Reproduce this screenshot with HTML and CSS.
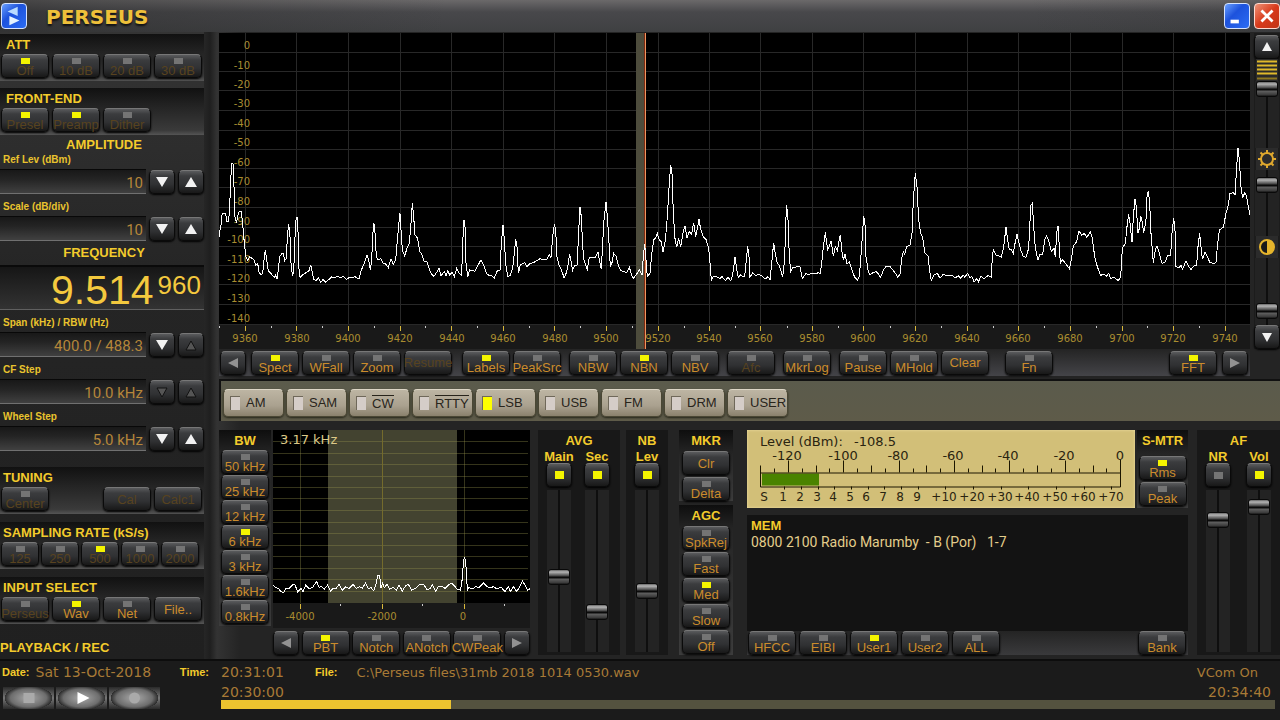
FILE: index.html
```html
<!DOCTYPE html>
<html lang="en">
<head>
<meta charset="utf-8">
<title>Perseus</title>
<link rel="stylesheet" href="styles.css">
</head>
<body>
<header class="titlebar">
  <button class="winbtn" aria-label="Application menu"><svg viewBox="0 0 26 26"><path d="M17 3v10L6 8z" fill="#b9dcff"/><path d="M8 13v10l11-5z" fill="#e4f3ff"/></svg></button>
  <h1>PERSEUS</h1>
  <div class="wincontrols">
    <button class="winbtn" aria-label="Minimize"><svg viewBox="0 0 26 26"><path d="M6 17h9v4H6z" fill="#fff"/></svg></button>
    <button class="winbtn close" aria-label="Close"><svg viewBox="0 0 26 26"><path d="M7 7l12 12M19 7L7 19" stroke="#fff" stroke-width="3"/></svg></button>
  </div>
</header>
<main class="radio">
  <aside class="side">
    <section class="panel">
      <h2>ATT</h2>
      <div class="row"><button class="btn led on dim">Off</button><button class="btn led dim">10 dB</button><button class="btn led dim">20 dB</button><button class="btn led dim">30 dB</button></div>
    </section>
    <section class="panel next">
      <h2>FRONT-END</h2>
      <div class="row"><button class="btn led on dim">Presel</button><button class="btn led on dim">Preamp</button><button class="btn led dim">Dither</button></div>
    </section>
    <h2 class="center">AMPLITUDE</h2>
    <div class="field"><label for="ref">Ref Lev (dBm)</label><div class="spin"><input id="ref" value="10"><button class="btn arrow" aria-label="Down"><svg viewBox="0 0 12 12"><path d="M0 1h12L6 11z"/></svg></button><button class="btn arrow" aria-label="Up"><svg viewBox="0 0 12 12"><path d="M0 11h12L6 1z"/></svg></button></div></div>
    <div class="field"><label for="scale">Scale (dB/div)</label><div class="spin"><input id="scale" value="10"><button class="btn arrow" aria-label="Down"><svg viewBox="0 0 12 12"><path d="M0 1h12L6 11z"/></svg></button><button class="btn arrow" aria-label="Up"><svg viewBox="0 0 12 12"><path d="M0 11h12L6 1z"/></svg></button></div></div>
    <h2 class="center freqhead">FREQUENCY</h2>
    <output class="freq"><span>9.514</span><span class="hz">960</span></output>
    <div class="field"><label for="span">Span (kHz) / RBW (Hz)</label><div class="spin"><input id="span" value="400.0 / 488.3"><button class="btn arrow" aria-label="Down"><svg viewBox="0 0 12 12"><path d="M0 1h12L6 11z"/></svg></button><button class="btn arrow off" aria-label="Up"><svg viewBox="0 0 12 12"><path d="M1 11L6 2l5 9z"/></svg></button></div></div>
    <div class="field"><label for="cf">CF Step</label><div class="spin"><input id="cf" value="10.0 kHz"><button class="btn arrow off" aria-label="Down"><svg viewBox="0 0 12 12"><path d="M1 2h10L6 11z"/></svg></button><button class="btn arrow off" aria-label="Up"><svg viewBox="0 0 12 12"><path d="M1 11L6 2l5 9z"/></svg></button></div></div>
    <div class="field"><label for="wheel">Wheel Step</label><div class="spin"><input id="wheel" value="5.0 kHz"><button class="btn arrow" aria-label="Down"><svg viewBox="0 0 12 12"><path d="M0 1h12L6 11z"/></svg></button><button class="btn arrow" aria-label="Up"><svg viewBox="0 0 12 12"><path d="M0 11h12L6 1z"/></svg></button></div></div>
    <section class="panel lower first">
      <h2>TUNING</h2>
      <div class="row"><button class="btn led dim">Center</button><button class="btn dim push">Cal</button><button class="btn dim">Calc1</button></div>
    </section>
    <section class="panel lower">
      <h2>SAMPLING RATE (kS/s)</h2>
      <div class="row five"><button class="btn led dim">125</button><button class="btn led dim">250</button><button class="btn led on dim">500</button><button class="btn led dim">1000</button><button class="btn led dim">2000</button></div>
    </section>
    <section class="panel lower">
      <h2>INPUT SELECT</h2>
      <div class="row"><button class="btn led dim">Perseus</button><button class="btn led on">Wav</button><button class="btn led">Net</button><button class="btn">File..</button></div>
    </section>
    <h2 class="playhead">PLAYBACK / REC</h2>
  </aside>

  <div class="work">
    <div class="scope">
      <svg class="spectrum" viewBox="219 33 1031 316" role="img" aria-label="Spectrum">
        <rect x="219" y="33" width="1031" height="292" fill="#000"/>
        <rect x="219" y="325" width="1031" height="24" fill="#191919"/>
        <path class="grid" d="M219 52.5H1250M219 71.5H1250M219 90.5H1250M219 110.5H1250M219 130.5H1250M219 149.5H1250M219 168.5H1250M219 187.5H1250M219 207.5H1250M219 227.5H1250M219 246.5H1250M219 265.5H1250M219 284.5H1250M219 304.5H1250M219 324.5H1250M245.5 33V324M296.5 33V324M348.5 33V324M400.5 33V324M451.5 33V324M503.5 33V324M554.5 33V324M606.5 33V324M658.5 33V324M709.5 33V324M760.5 33V324M812.5 33V324M863.5 33V324M915.5 33V324M967.5 33V324M1018.5 33V324M1070.5 33V324M1122.5 33V324M1173.5 33V324M1225.5 33V324"/>
        <path stroke="#d9b93c" d="M245.5 326v5M296.5 326v5M348.5 326v5M400.5 326v5M451.5 326v5M503.5 326v5M554.5 326v5M606.5 326v5M658.5 326v5M709.5 326v5M760.5 326v5M812.5 326v5M863.5 326v5M915.5 326v5M967.5 326v5M1018.5 326v5M1070.5 326v5M1122.5 326v5M1173.5 326v5M1225.5 326v5"/>
        <path stroke="#ccc" d="M219.5 326v2M271.5 326v2M322.5 326v2M374.5 326v2M425.5 326v2M477.5 326v2M529.5 326v2M580.5 326v2M632.5 326v2M684.5 326v2M735.5 326v2M787.5 326v2M838.5 326v2M890.5 326v2M941.5 326v2M993.5 326v2M1044.5 326v2M1096.5 326v2M1147.5 326v2M1199.5 326v2"/>
        <rect x="636" y="33" width="9" height="316" fill="#4d4c3c"/>
        <g class="axis" text-anchor="end">
          <text x="250" y="49">0</text><text x="250" y="69">-10</text><text x="250" y="88">-20</text><text x="250" y="107">-30</text><text x="250" y="127">-40</text><text x="250" y="146">-50</text><text x="250" y="166">-60</text><text x="250" y="185">-70</text><text x="250" y="205">-80</text><text x="250" y="225">-90</text><text x="250" y="243">-100</text><text x="250" y="263">-110</text><text x="250" y="282">-120</text><text x="250" y="302">-130</text><text x="250" y="322">-140</text>
        </g>
        <g class="axis" text-anchor="middle">
          <text x="245" y="342">9360</text><text x="297" y="342">9380</text><text x="348" y="342">9400</text><text x="400" y="342">9420</text><text x="452" y="342">9440</text><text x="503" y="342">9460</text><text x="555" y="342">9480</text><text x="606" y="342">9500</text><text x="658" y="342">9520</text><text x="709" y="342">9540</text><text x="760" y="342">9560</text><text x="812" y="342">9580</text><text x="863" y="342">9600</text><text x="915" y="342">9620</text><text x="967" y="342">9640</text><text x="1018" y="342">9660</text><text x="1070" y="342">9680</text><text x="1122" y="342">9700</text><text x="1173" y="342">9720</text><text x="1225" y="342">9740</text>
        </g>
        <path d="M644.5 33V349" stroke="#7b2a12"/><path d="M645.5 33V349" stroke="#ee9560"/>
        <g class="trace" transform="translate(215 30) scale(.33333)"><polyline points="10,636 15,600 18,585 20,558 24,550 32,552 36,575 40,575 44,540 46,470 50,402 54,402 57,470 60,560 64,578 68,560 72,545 78,543 82,570 88,640 93,680 98,690 104,680 112,686 118,690 122,706 128,700 132,725 138,736 143,730 147,690 151,660 155,690 160,722 170,733 178,742 181,735 186,746 190,720 194,680 200,672 205,672 209,692 214,685 217,620 221,582 225,620 228,700 232,735 236,730 239,640 243,570 246,562 249,600 250,700 255,742 262,735 275,727 282,722 287,704 291,722 296,748 303,752 310,744 317,757 324,749 332,757 340,750 350,741 358,744 367,738 375,743 385,739 395,748 403,742 412,742 420,740 432,747 438,722 448,700 456,676 461,690 466,720 470,690 473,620 476,578 479,590 484,680 490,690 497,686 505,700 512,702 520,713 528,686 535,703 542,690 548,620 552,575 555,550 558,600 562,660 569,678 576,655 583,640 588,580 592,519 596,560 600,615 608,625 614,665 620,672 628,695 635,693 642,715 650,733 657,739 665,727 672,715 678,737 688,725 693,737 698,722 704,735 712,727 718,740 725,715 732,730 740,736 743,640 747,570 750,590 753,700 758,740 764,720 772,722 780,724 788,708 798,689 806,705 814,730 822,736 830,738 838,744 847,722 855,720 859,640 864,585 868,630 872,700 878,740 885,737 893,715 897,680 902,628 906,650 910,730 916,705 924,700 930,698 936,710 945,700 955,698 965,692 975,686 985,690 995,688 1003,675 1008,682 1013,620 1018,583 1022,600 1026,680 1032,705 1040,722 1048,745"/></g>
        <g class="trace" transform="translate(560 30) scale(.33333)"><polyline points="13,745 20,725 24,705 29,672 35,705 38,720 44,706 52,705 55,620 60,532 64,560 68,650 72,690 82,718 88,682 96,682 105,683 114,665 118,690 124,718 128,640 132,570 138,515 142,560 146,620 151,710 157,695 161,670 168,678 175,705 182,722 192,725 200,728 208,712 215,735 220,745 230,732 238,720 246,735 250,680 254,642 258,690 262,740 270,730 276,665 282,628 288,622 292,610 297,628 304,635 309,665 316,632 322,560 326,490 332,405 336,430 339,520 344,620 350,652 356,625 362,650 370,605 375,588 381,625 388,605 395,612 401,578 407,620 413,590 417,568 422,598 430,620 438,628 446,655 450,700 454,750 460,738 470,740 480,745 486,740 496,752 504,742 512,752 516,742 520,722 525,680 530,718 535,742 542,735 548,740 554,740 558,700 563,648 567,680 570,742 578,728 586,737 596,733 606,738 616,747 624,740 630,750 636,690 641,638 646,672 652,700 658,706 668,740 674,690 677,580 680,524 684,570 688,680 692,725 698,712 706,712 714,708 720,710 727,745 738,730 745,735 755,730 765,732 775,728 781,730 786,690 790,650 796,607 803,660 808,650 813,632 820,678 826,650 832,662 836,640 841,614 846,665 850,690 855,672 861,702 868,695 876,720 884,742 892,750 898,740 902,690 907,620 911,558 915,585 918,680 925,725 930,735 940,727 948,725 955,732 962,742 970,720 978,710 990,710 1000,722 1008,732 1014,742 1020,732"/></g>
        <g class="trace" transform="translate(900 0) scale(.33333)"><polyline points="0,822 5,775 10,755 14,762 20,740 30,735 36,700 40,600 46,520 51,560 56,660 62,700 68,712 75,760 84,768 90,820 94,842 102,825 112,820 120,835 130,822 140,828 155,825 165,834 175,828 182,834 190,826 195,832 202,820 210,832 216,830 222,846 230,836 235,846 243,828 252,836 265,826 274,832 277,770 280,750 288,765 296,768 304,772 311,740 318,682 323,720 328,748 334,748 340,760 346,725 351,703 357,730 362,750 370,770 378,772 386,745 389,680 393,615 397,610 401,680 406,745 414,780 420,762 428,765 434,720 440,708 448,728 454,755 462,745 466,772 470,700 474,677 478,740 481,790 488,778 496,790 508,806 514,780 520,738 530,725 537,692 545,706 553,700 560,712 571,696 577,715 584,770 592,800 602,826 612,822 620,828 626,820 632,835 642,832 655,842 662,830 667,745 676,730 681,680 686,643 690,670 696,727 700,650 705,598 709,620 714,700 718,685 722,648 727,665 731,700 738,660 741,590 745,573 749,610 753,700 760,788 766,750 771,738 778,760 786,790 796,785 802,768 812,765 816,700 821,655 825,690 828,800 838,803 843,795 847,808 853,795 858,783 866,800 873,808 882,798 890,795 894,740 899,700 903,740 907,778 915,757 922,770 930,788 942,790 948,788 952,740 958,690 970,682 978,640 985,615 990,580 1000,578 1005,585 1010,500 1014,443 1018,480 1023,560 1028,595 1034,578 1040,590 1046,625 1050,645"/></g>
      </svg>
      <div class="rail">
        <button class="btn arrow" aria-label="Scroll up"><svg viewBox="0 0 12 12"><path d="M1 10h10L6 1z"/></svg></button>
        <svg class="railicon" viewBox="0 0 22 22"><path d="M1 2.5h20M1 6.5h20M1 10.5h20M1 14.5h20" stroke="#e0b92a" stroke-width="2"/><path d="M1 19.5h20" stroke="#8c7720" stroke-width="2"/></svg>
        <input type="range" class="slider" aria-label="Waterfall speed" value="0">
        <svg class="railicon" viewBox="0 0 22 22" fill="none" stroke="#e0a92e"><circle cx="11" cy="11" r="6" stroke-width="2"/><path d="M11 2v3M11 17v3M2 11h3M17 11h3M4.500 4.500l2 2M15.500 15.500l2 2M4.500 17.500l2-2M15.500 6.500l2-2" stroke-width="2"/></svg>
        <input type="range" class="slider" aria-label="Brightness" value="14">
        <svg class="railicon" viewBox="0 0 22 22"><circle cx="11" cy="11" r="7" fill="#191919" stroke="#e6b52c" stroke-width="2"/><path d="M11 4a7 7 0 0 1 0 14z" fill="#e6b52c"/></svg>
        <input type="range" class="slider" aria-label="Contrast" value="88">
        <button class="btn arrow" aria-label="Scroll down"><svg viewBox="0 0 12 12"><path d="M1 2h10L6 11z"/></svg></button>
      </div>
    </div>

    <nav class="toolbar">
      <button class="btn arrow gray" aria-label="Previous"><svg viewBox="0 0 12 12"><path d="M11 1v10L1 6z"/></svg></button>
      <div class="row g5"><button class="btn led on">Spect</button><button class="btn led">WFall</button><button class="btn led">Zoom</button><button class="btn dim">Resume</button></div>
      <div class="row g10"><button class="btn led on">Labels</button><button class="btn led">PeakSrc</button></div>
      <div class="row g8"><button class="btn led">NBW</button><button class="btn led on">NBN</button><button class="btn led">NBV</button></div>
      <div class="row g8"><button class="btn led dim">Afc</button></div>
      <div class="row g8"><button class="btn led">MkrLog</button></div>
      <div class="row g8"><button class="btn led">Pause</button><button class="btn led">MHold</button><button class="btn">Clear</button></div>
      <div class="row g16"><button class="btn led">Fn</button></div>
      <div class="row end"><button class="btn led on">FFT</button></div>
      <button class="btn arrow gray g5" aria-label="Next"><svg viewBox="0 0 12 12"><path d="M1 1v10l10-5z"/></svg></button>
    </nav>

    <nav class="modes">
      <button>AM</button><button>SAM</button><button><span class="over">CW</span></button><button><span class="over">RTTY</span></button><button class="on">LSB</button><button>USB</button><button>FM</button><button>DRM</button><button>USER</button>
    </nav>

    <div class="deck">
      <section class="stack bw">
        <h2>BW</h2>
        <button class="btn led">50 kHz</button><button class="btn led">25 kHz</button><button class="btn led">12 kHz</button><button class="btn led on">6 kHz</button><button class="btn led">3 kHz</button><button class="btn led">1.6kHz</button><button class="btn led">0.8kHz</button>
      </section>
      <section class="filter">
        <svg viewBox="273 430 257 198" role="img" aria-label="Filter passband">
          <rect x="273" y="430" width="257" height="173" fill="#000"/><rect x="273" y="603" width="257" height="25" fill="#191919"/>
          <rect x="328" y="430" width="129" height="173" fill="#434330"/>
          <path stroke="#98954e" stroke-opacity=".35" d="M273 441.5H528M273 453.5H528M273 464.5H528M273 476.5H528M273 487.5H528M273 498.5H528M273 510.5H528M273 522.5H528M273 533.5H528M273 545.5H528M273 556.5H528M273 568.5H528M273 579.5H528M273 591.5H528M300.5 430V603M464.5 430V603"/>
          <path stroke="#746b2c" d="M382.5 430V603"/>
          <path stroke="#d9b93c" d="M300.5 604v5M382.5 604v5M464.5 604v5"/><path stroke="#ccc" d="M340.5 604v2M422.5 604v2M504.5 604v2"/>
          <text class="bwtext" x="280" y="444">3.17 kHz</text>
          <g class="axis" text-anchor="middle"><text x="300" y="620">-4000</text><text x="382" y="620">-2000</text><text x="463" y="620">0</text></g>
          <g class="trace" transform="translate(215 425) scale(.33333)"><polyline points="175,480 182,488 190,490 198,500 206,502 212,490 222,490 232,480 240,480 248,500 258,490 264,500 272,480 282,490 292,488 305,470 312,487 320,485 328,492 338,480 346,498 354,490 362,492 372,478 382,496 392,485 402,490 414,478 424,490 434,485 442,490 452,474 460,492 468,488 476,497 484,475 488,452 494,452 498,490 503,475 508,488 516,478 524,492 534,487 544,495 552,480 562,498 572,482 580,478 590,495 602,490 614,478 626,478 636,495 646,490 652,480 662,498 670,485 682,485 690,490 700,480 710,475 720,485 728,494 736,495 740,480 744,430 748,395 752,410 754,440 757,495 762,488 772,492 782,485 792,488 806,474 816,485 826,488 836,485 846,492 858,486 870,500 880,485 886,500 896,485 904,498 912,490 922,468 930,480 938,496 946,490"/></g>
        </svg>
        <div class="row"><button class="btn arrow gray" aria-label="Previous"><svg viewBox="0 0 12 12"><path d="M11 1v10L1 6z"/></svg></button><button class="btn led on">PBT</button><button class="btn led">Notch</button><button class="btn led">ANotch</button><button class="btn led">CWPeak</button><button class="btn arrow gray" aria-label="Next"><svg viewBox="0 0 12 12"><path d="M1 1v10l10-5z"/></svg></button></div>
      </section>
      <section class="levels avg">
        <h2>AVG</h2>
        <div class="pair">
          <div class="fader"><label for="fmain">Main</label><button class="btn sq on" aria-label="Main averaging"></button><input id="fmain" type="range" class="slider" value="54"></div>
          <div class="fader"><label for="fsec">Sec</label><button class="btn sq on" aria-label="Secondary averaging"></button><input id="fsec" type="range" class="slider" value="78"></div>
        </div>
      </section>
      <section class="levels nb">
        <h2>NB</h2>
        <div class="pair"><div class="fader"><label for="fnb">Lev</label><button class="btn sq on" aria-label="Noise blanker"></button><input id="fnb" type="range" class="slider" value="64"></div></div>
      </section>
      <div class="ctl">
        <section class="stack"><h2>MKR</h2><button class="btn">Clr</button><button class="btn led">Delta</button></section>
        <section class="stack agc"><h2>AGC</h2><button class="btn led">SpkRej</button><button class="btn led">Fast</button><button class="btn led on">Med</button><button class="btn led">Slow</button><button class="btn led">Off</button></section>
      </div>
      <div class="mid">
        <div class="meterrow">
          <svg class="meter" viewBox="747 430 388 77" role="img" aria-label="S meter">
            <rect x="762" y="473" width="57" height="12" fill="#4a8300"/>
            <path fill="none" stroke="#1c1600" d="M760.5 465V486.5H1120.5V459M760 472.5H1120"/>
            <path stroke="#1c1600" d="M788.5 460v12M843.5 460v12M899.5 460v12M954.5 460v12M1009.5 460v12M1065.5 460v12M774.5 468v4M802.5 468v4M816.5 465v7M829.5 468v4M857.5 468v4M871.5 465v7M885.5 468v4M913.5 468v4M926.5 465v7M940.5 468v4M968.5 468v4M982.5 465v7M995.5 468v4M1023.5 468v4M1037.5 465v7M1051.5 468v4M1079.5 468v4M1093.5 465v7M1106.5 468v4M784.5 486v3M801.5 486v3M818.5 486v3M834.5 486v3M851.5 486v3M868.5 486v3M884.5 486v3M901.5 486v3M918.5 486v3M945.5 486v3M973.5 486v3M1001.5 486v3M1028.5 486v3M1056.5 486v3M1084.5 486v3M1111.5 486v3"/>
            <g class="mt"><text x="760" y="445">Level (dBm):</text><text x="854" y="445">-108.5</text></g>
            <g class="mt" text-anchor="middle"><text x="787" y="459">-120</text><text x="843" y="459">-100</text><text x="898" y="459">-80</text><text x="953" y="459">-60</text><text x="1008" y="459">-40</text><text x="1064" y="459">-20</text><text x="1120" y="459">0</text></g>
            <g class="ms" text-anchor="middle"><text x="764" y="500">S</text><text x="783" y="500">1</text><text x="800" y="500">2</text><text x="817" y="500">3</text><text x="833" y="500">4</text><text x="850" y="500">5</text><text x="866" y="500">6</text><text x="883" y="500">7</text><text x="900" y="500">8</text><text x="917" y="500">9</text><text x="944" y="500">+10</text><text x="972" y="500">+20</text><text x="1000" y="500">+30</text><text x="1027" y="500">+40</text><text x="1055" y="500">+50</text><text x="1083" y="500">+60</text><text x="1111" y="500">+70</text></g>
          </svg>
          <section class="stack smtr"><h2>S-MTR</h2><button class="btn led on">Rms</button><button class="btn led">Peak</button></section>
        </div>
        <section class="mem">
          <h2>MEM</h2>
          <p>0800 2100 Radio Marumby&nbsp; - B (Por)&nbsp;&nbsp; 1-7</p>
          <div class="row"><button class="btn led">HFCC</button><button class="btn led">EIBI</button><button class="btn led on">User1</button><button class="btn led">User2</button><button class="btn led">ALL</button><button class="btn led push">Bank</button></div>
        </section>
      </div>
      <section class="levels af">
        <h2>AF</h2>
        <div class="pair">
          <div class="fader"><label for="fnr">NR</label><button class="btn sq" aria-label="Noise reduction"></button><input id="fnr" type="range" class="slider" value="15"></div>
          <div class="fader"><label for="fvol">Vol</label><button class="btn sq on" aria-label="Volume on"></button><input id="fvol" type="range" class="slider" value="6"></div>
        </div>
      </section>
    </div>
  </div>
</main>

<footer class="player">
  <div class="cell date"><b>Date:</b><span>Sat 13-Oct-2018</span><b class="push">Time:</b></div>
  <div class="cell"><time>20:31:01</time><b class="file">File:</b><span class="path">C:\Perseus files\31mb 2018 1014 0530.wav</span><span class="vcom">VCom On</span></div>
  <div class="transport">
    <button aria-label="Stop"><svg viewBox="0 0 50 22"><path d="M20 6h11v10H20z" fill="#aaa"/></svg></button>
    <button aria-label="Play"><svg viewBox="0 0 50 22"><path d="M21 5l12 6-12 6z" fill="#fff"/></svg></button>
    <button aria-label="Record"><svg viewBox="0 0 50 22"><circle cx="25" cy="11" r="5.500" fill="#aaa"/></svg></button>
  </div>
  <div class="progress"><div class="times"><time>20:30:00</time><time>20:34:40</time></div><progress value="218" max="1000" aria-label="Playback position"></progress></div>
</footer>
</body>
</html>
```
FILE: styles.css
```css
* { box-sizing: border-box; }
body {
  margin: 0;
  min-height: 100vh;
  display: flex;
  flex-direction: column;
  background: #242424;
  color: #c0893a;
  font-family: "Liberation Sans", Arial, sans-serif;
  font-size: 13px;
}
h1, h2, p { margin: 0; }
h2, b { color: #f3cb2c; font-weight: bold; }
h2 { font-size: 13px; line-height: 14px; }
button, input { font: inherit; color: inherit; margin: 0; padding: 0; }
svg { display: block; }

.titlebar {
  height: 32px;
  display: flex;
  align-items: center;
  padding: 0 0 0 1px;
  background: linear-gradient(90deg, #2a2a2a99 0, #2a2a2a66 8%, #55555500 35%, #44444700 80%, #2222), linear-gradient(#6b696a, #48484b 12px, #3f4042);
}
.titlebar h1 { margin-left: 19px; padding-top: 2px; font: bold 20px/24px "DejaVu Sans", sans-serif; color: #eec03a; text-shadow: 0 2px 2px #111; }
.wincontrols { margin-left: auto; display: flex; gap: 4px; }
.winbtn { width: 26px; height: 26px; border: 1px solid #d5e3ff; border-radius: 4px; background: linear-gradient(135deg, #6aa0ff, #1d52dc 40%, #2b6df5); }
.winbtn svg { width: 100%; height: 100%; }
.winbtn.close { background: linear-gradient(135deg, #ee9478, #d83a1b 50%, #c13416); border-color: #ffd9cf; }

.radio { display: grid; grid-template-columns: 204px minmax(0, 1fr); column-gap: 15px; background: linear-gradient(90deg, #262626, #262626 204px, #1f1f1f 210px, #333 217px, #242424 240px); }
.side { padding-top: 2px; background: linear-gradient(#343434, #252525 40%, #202020); }

.btn {
  width: 48px;
  height: 24px;
  flex: none;
  display: flex;
  flex-direction: column;
  align-items: center;
  justify-content: center;
  border: 1px solid #0a0a0a;
  border-top-color: #777;
  border-radius: 5px;
  background: linear-gradient(#5a5b5d, #3b3c3e 5px, #303133 60%, #181818);
  box-shadow: 0 1px 2px #000;
  color: #cb8c2c;
  line-height: 13px;
  white-space: nowrap;
}
.btn.led { justify-content: flex-start; }
.btn.led::before, .btn.sq::before { content: ""; flex: none; width: 9px; height: 6px; margin-top: 3px; background: #747474; }
.btn.on::before { background: #f4f400; }
.btn.dim { color: #58431f; }
.btn.sq { width: 26px; }
.btn.sq::before { height: 7px; margin: 0; }
.btn.sq.on::before { width: 9px; height: 8px; }
.btn.arrow { width: 26px; }
.btn.arrow svg { width: 12px; height: 12px; fill: #f2f2f2; }
.btn.arrow.gray svg { fill: #929292; }
.btn.arrow.off svg { fill: #555; stroke: #111; }

.row { display: flex; gap: 3px; }
.push { margin-left: auto; }
.panel { padding: 4px 2px 3px 1px; background: linear-gradient(#111, #242424 40%, #3a3a3a 90%, #555); }
.panel.next { margin-top: 7px; }
.panel.lower { margin-top: 8px; }
.panel.first { margin-top: 16px; }
.panel h2 { margin: 0 0 2px 5px; }
.panel.lower h2 { margin-left: 2px; }
.five { gap: 2px; }
.five .btn { width: 38px; }
.center { text-align: center; line-height: 16px; margin-top: 2px; padding-left: 4px; }
.freqhead { margin-top: 4px; }
.field label { display: block; height: 14px; margin: 0 0 2px 3px; font: bold 10px/14px "Liberation Sans", Arial, sans-serif; color: #e9c32e; }
.field + .field, .freq + .field { margin-top: 6px; }
.spin { display: flex; gap: 3px; align-items: center; }
.spin input {
  flex: 1;
  min-width: 0;
  height: 25px;
  padding: 2px 3px 0 0;
  border: 0;
  border-top: 1px solid #080808;
  border-bottom: 1px solid #707070;
  background: linear-gradient(#181818, #242424 40%, #404040);
  text-align: right;
  font: 15px Roboto, sans-serif;
  color: #b5863a;
}
.freq { display: flex; justify-content: flex-end; gap: 4px; height: 45px; margin-top: 4px; padding-right: 3px; border-top: 2px solid #0a0a0a; border-bottom: 1px solid #606060; background: linear-gradient(#161616, #333); color: #f4c93e; font-size: 41px; line-height: 46px; }
.hz { font-size: 26px; line-height: 36px; }
.playhead { margin: 16px 0 3px; line-height: 16px; }

.work { min-width: 0; }
.scope { display: grid; grid-template-columns: minmax(0, 1fr) 26px; column-gap: 4px; padding-top: 1px; }
.spectrum { width: 100%; height: auto; }
.grid { stroke: #282828; fill: none; }
.axis { font: 10px "DejaVu Sans", sans-serif; fill: #a98d30; }
.trace { fill: none; stroke: #fff; stroke-width: 1px; shape-rendering: crispEdges; }
.trace polyline { vector-effect: non-scaling-stroke; }
.rail { display: flex; flex-direction: column; align-items: center; padding-top: 2px; background: #1c1c1c; }
.railicon { width: 22px; height: 22px; flex: none; background: #2b2b2b; }
.slider {
  appearance: none;
  writing-mode: vertical-lr;
  width: 24px;
  flex: 1;
  min-height: 0;
  background: linear-gradient(90deg, #232323 11px, #0e0e0e 11px, #0e0e0e 13px, #232323 13px);
}
.slider::-webkit-slider-thumb {
  appearance: none;
  width: 22px;
  height: 16px;
  border: 1px solid #090909;
  border-radius: 3px;
  background: linear-gradient(#666, #b5b5b5 2px, #444 6px, #0b0b0b 7px, #0b0b0b 8px, #606060 9px, #383838 13px, #111);
}

.toolbar { display: flex; align-items: center; height: 27px; margin-right: 30px; padding: 0 2px 0 1px; background: linear-gradient(#242424, #444448); }
.g5 { margin-left: 5px; }
.g8 { margin-left: 8px; }
.g10 { margin-left: 10px; }
.g16 { margin-left: 16px; }
.end { margin-left: auto; }

.modes { display: flex; gap: 2px; align-items: center; height: 42px; margin-top: 3px; padding: 3px 2px 0; border-left: 2px solid #111; border-top: 2px solid #111; background: linear-gradient(#5b5b4c, #5e5b49); }
.modes button { display: flex; align-items: center; gap: 6px; width: 61px; height: 28px; padding-left: 6px; border: 1px solid #4a4734; border-top-color: #ddd6c6; border-radius: 5px; background: linear-gradient(#bdb5a3, #aaa18f 60%, #8a816d); box-shadow: 0 1px 2px #25251a; color: #28241b; }
.modes button::before { content: ""; width: 9px; height: 13px; flex: none; background: #d5cdc8; border-top: 1px solid #6f685a; border-left: 1px solid #6f685a; }
.modes button.on::before { background: #ff0; }
.over { border-top: 1px solid #28241b; line-height: 15px; }

.deck { display: flex; margin-top: 9px; }
.deck h2 { text-align: center; }
.stack { display: flex; flex-direction: column; align-items: center; gap: 2px; padding-top: 4px; background: linear-gradient(#0e0e0e, #252525 24px, #3c3c3c); }
.stack h2 { margin-bottom: 1px; }
.bw { width: 52px; gap: 1px; align-self: flex-start; padding-bottom: 2px; }
.bw h2 { margin-bottom: 1px; }
.filter { flex: 257 1 0; min-width: 0; margin-left: 2px; }
.filter > svg { width: 100%; height: auto; margin-bottom: 3px; }
.filter .row { gap: 2px; justify-content: space-between; }
.bwtext { font: 13px "DejaVu Sans", sans-serif; fill: #dcc988; }
.levels { display: flex; flex-direction: column; padding: 4px 8px 3px; background: #181818; }
.levels label { color: #f3cb2c; font-weight: bold; line-height: 15px; margin-top: 1px; }
.avg { width: 82px; margin-left: 8px; }
.avg .pair { padding-right: 2px; }
.nb { width: 42px; margin-left: 6px; }
.af { width: 83px; margin-left: 9px; }
.pair { flex: 1; display: flex; justify-content: space-between; }
.nb .pair { justify-content: center; }
.fader { display: flex; flex-direction: column; align-items: center; width: 26px; }
.fader .btn { margin-bottom: 3px; margin-top: -1px; }
.ctl { width: 54px; margin-left: 11px; margin-right: 1px; display: flex; flex-direction: column; justify-content: space-between; }
.agc { padding-bottom: 1px; }
.mid { flex: 441 1 0; min-width: 0; margin-left: 13px; display: flex; flex-direction: column; }
.meterrow { display: flex; gap: 2px; }
.meter { flex: 1; min-width: 0; background: #d2bf78; box-shadow: inset 0 0 3px #eee0a4; }
.mt, .ms { font: 13px "DejaVu Sans", sans-serif; fill: #2a2410; }
.ms { font-size: 12px; }
.smtr { width: 51px; justify-content: space-between; padding-bottom: 2px; }
.smtr h2 { margin-bottom: 6px; }
.mem { flex: 1; display: flex; flex-direction: column; margin-top: 7px; background: #131313; }
.mem h2 { text-align: left; margin: 4px 0 0 4px; }
.mem p { padding: 1px 0 0 4px; font: 14px/16px Roboto, sans-serif; color: #e3cd8b; }
.mem .row { margin-top: auto; padding: 0 2px 0 1px; background: linear-gradient(#242424, #3a3a3c); }

.player { flex: 1; display: grid; grid-template-columns: 219px minmax(0, 1fr); align-content: start; padding-top: 2px; border-top: 2px solid #0d0d0d; background: #1b1b1b; font-family: "DejaVu Sans", sans-serif; font-size: 13px; color: #a87a36; }
.cell { display: flex; align-items: center; height: 18px; white-space: nowrap; }
.cell b { font: bold 11px "Liberation Sans", Arial, sans-serif; }
.date { padding: 0 10px 0 2px; gap: 6px; }
.date span, .player time { font-size: 14px; }
.cell time { margin-left: 2px; }
.file { margin-left: 31px; }
.path { margin-left: 19px; }
.vcom { margin-left: auto; padding-right: 22px; }
.transport { display: flex; gap: 2px; padding: 6px 0 0 3px; }
.transport button { width: 51px; height: 22px; border: 0; background: radial-gradient(ellipse 24px 12px at center, #aaa 0, #6d6d6d 75%, #2b2b2b 100%, #7770), linear-gradient(#2a2a2a, #777 50%, #2a2a2a); }
.transport svg { width: 100%; height: 100%; }
.progress { padding: 3px 5px 0 2px; }
.times { display: flex; justify-content: space-between; line-height: 16px; padding: 0 4px 0 0; }
progress { appearance: none; display: block; width: 100%; height: 9px; border: 0; background: #54523f; }
progress::-webkit-progress-bar { background: #54523f; }
progress::-webkit-progress-value { background: #edc42f; }
```
